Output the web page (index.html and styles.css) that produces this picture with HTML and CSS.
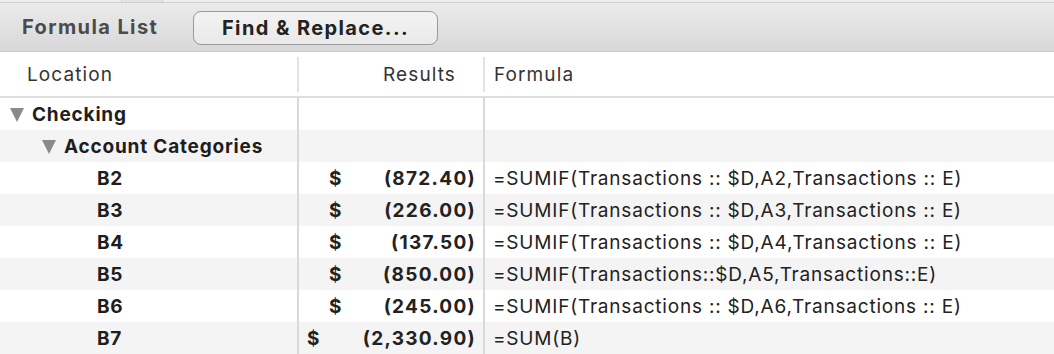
FILE: index.html
```html
<!DOCTYPE html>
<html lang="en">
<head>
    <meta charset="UTF-8">
    <title>Formula List</title>
    <link rel="stylesheet" href="styles.css">
</head>
<body>
  <div class="tabstrip">
    <div class="tab t1"></div>
    <div class="tab t2"></div>
    <div class="tab t3"></div>
  </div>

  <div class="toolbar">
    <span class="toolbar-title">Formula List</span>
    <button class="find-btn" type="button">Find &amp; Replace...</button>
  </div>

  <div class="grid">
    <div class="head loc">Location</div>
    <div class="head res">Results</div>
    <div class="head form">Formula</div>

    <div class="cell loc lvl0"><span class="tri"></span>Checking</div>
    <div class="cell res"></div>
    <div class="cell form"></div>

    <div class="cell loc lvl1 alt"><span class="tri"></span>Account Categories</div>
    <div class="cell res alt"></div>
    <div class="cell form alt"></div>

    <div class="cell loc lvl2">B2</div>
    <div class="cell res"><span class="cur">$</span><span>(872.40)</span></div>
    <div class="cell form">=SUMIF(Transactions :: $D,A2,Transactions :: E)</div>

    <div class="cell loc lvl2 alt">B3</div>
    <div class="cell res alt"><span class="cur">$</span><span>(226.00)</span></div>
    <div class="cell form alt">=SUMIF(Transactions :: $D,A3,Transactions :: E)</div>

    <div class="cell loc lvl2">B4</div>
    <div class="cell res"><span class="cur">$</span><span>(137.50)</span></div>
    <div class="cell form">=SUMIF(Transactions :: $D,A4,Transactions :: E)</div>

    <div class="cell loc lvl2 alt">B5</div>
    <div class="cell res alt"><span class="cur">$</span><span>(850.00)</span></div>
    <div class="cell form alt">=SUMIF(Transactions::$D,A5,Transactions::E)</div>

    <div class="cell loc lvl2">B6</div>
    <div class="cell res"><span class="cur">$</span><span>(245.00)</span></div>
    <div class="cell form">=SUMIF(Transactions :: $D,A6,Transactions :: E)</div>

    <div class="cell loc lvl2 alt">B7</div>
    <div class="cell res wide alt"><span class="cur">$</span><span>(2,330.90)</span></div>
    <div class="cell form alt">=SUM(B)</div>
  </div>
</body>
</html>
```

FILE: styles.css
```css
* {
  box-sizing: border-box;
}

body {
  margin: 0;
  width: 1054px;
  height: 354px;
  overflow: hidden;
  font-family: Inter, "Noto Sans", sans-serif;
  background: #fff;
  color: #222;
}

.tabstrip {
  display: flex;
  height: 3px;
  background: #ededed;
  border-bottom: 1px solid #cfcfcf;
}

.tab {
  height: 2px;
}

.t1 {
  width: 122px;
  border-right: 1px solid #d0d0d0;
}

.t2 {
  width: 41px;
  background: #e3e3e3;
  border-right: 1px solid #d0d0d0;
}

.toolbar {
  display: flex;
  align-items: center;
  height: 49px;
  padding-left: 22px;
  background: linear-gradient(#ebebeb, #d8d8d8);
  border-bottom: 1px solid #cbcbcb;
}

.toolbar-title {
  font-size: 20px;
  font-weight: 700;
  letter-spacing: 1.4px;
  color: #4b4b4b;
  width: 171px;
}

.find-btn {
  font-family: inherit;
  font-size: 20px;
  font-weight: 700;
  letter-spacing: 1.4px;
  color: #222;
  width: 245px;
  height: 34px;
  border: 1.5px solid #9a9a9a;
  border-radius: 8px;
  background: linear-gradient(#f3f3f3, #e9e9e9);
  padding: 0;
  margin-top: 1px;
}

.grid {
  display: grid;
  grid-template-columns: 299px 186px 1fr;
  grid-template-rows: 46px repeat(8, 32px);
}

.head {
  display: flex;
  align-items: center;
  font-size: 19px;
  letter-spacing: 1.1px;
  color: #333;
  border-bottom: 2px solid #dedede;
  position: relative;
}

.head.loc {
  padding-left: 27px;
}

.head.res {
  justify-content: flex-end;
  padding-right: 29px;
}

.head.form {
  padding-left: 9px;
}

.head.loc::after,
.head.res::after {
  content: "";
  position: absolute;
  right: 0;
  top: 5px;
  bottom: 4px;
  width: 2px;
  background: #e2e2e2;
}

.cell {
  display: flex;
  align-items: center;
  font-size: 19px;
  letter-spacing: 0.8px;
  white-space: nowrap;
}

.cell.alt {
  background: #f4f4f4;
}

.cell.loc {
  font-weight: 700;
  color: #1e1e1e;
  border-right: 2px solid #d9d9d9;
}

.cell.res {
  font-weight: 700;
  justify-content: space-between;
  padding-left: 30px;
  padding-right: 7px;
  border-right: 2px solid #d9d9d9;
  letter-spacing: 1.3px;
}

.cell.res.wide {
  padding-left: 8px;
}

.cell.form {
  padding-left: 8px;
  color: #222;
}

.lvl0 {
  padding-left: 10px;
}

.lvl1 {
  padding-left: 42px;
}

.lvl2 {
  padding-left: 97px;
}

.tri {
  width: 0;
  height: 0;
  border-left: 7.5px solid transparent;
  border-right: 7.5px solid transparent;
  border-top: 14px solid #8a8a8a;
  margin-right: 8px;
  margin-top: 1px;
}
```
